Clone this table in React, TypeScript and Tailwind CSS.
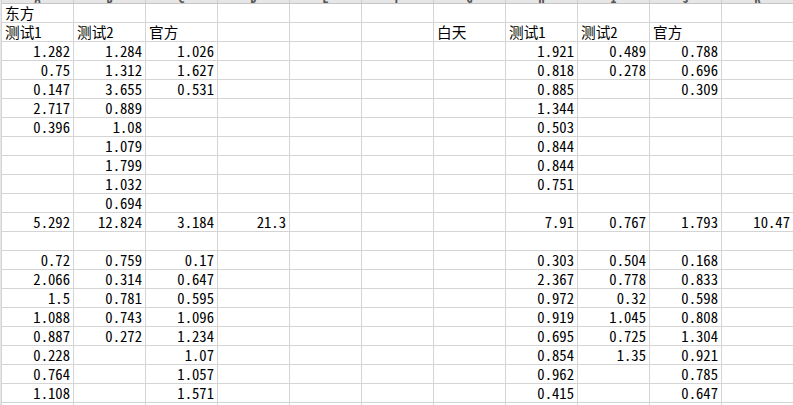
import React from "react";

const COLS = 11;
const letters = ["A", "B", "C", "D", "E", "F", "G", "H", "I", "J", "K"];

type Cell = string | null;

const rows: Cell[][] = [
  ["东方"],
  ["测试1", "测试2", "官方", null, null, null, "白天", "测试1", "测试2", "官方"],
  ["1.282", "1.284", "1.026", null, null, null, null, "1.921", "0.489", "0.788"],
  ["0.75", "1.312", "1.627", null, null, null, null, "0.818", "0.278", "0.696"],
  ["0.147", "3.655", "0.531", null, null, null, null, "0.885", null, "0.309"],
  ["2.717", "0.889", null, null, null, null, null, "1.344"],
  ["0.396", "1.08", null, null, null, null, null, "0.503"],
  [null, "1.079", null, null, null, null, null, "0.844"],
  [null, "1.799", null, null, null, null, null, "0.844"],
  [null, "1.032", null, null, null, null, null, "0.751"],
  [null, "0.694"],
  ["5.292", "12.824", "3.184", "21.3", null, null, null, "7.91", "0.767", "1.793", "10.47"],
  [],
  ["0.72", "0.759", "0.17", null, null, null, null, "0.303", "0.504", "0.168"],
  ["2.066", "0.314", "0.647", null, null, null, null, "2.367", "0.778", "0.833"],
  ["1.5", "0.781", "0.595", null, null, null, null, "0.972", "0.32", "0.598"],
  ["1.088", "0.743", "1.096", null, null, null, null, "0.919", "1.045", "0.808"],
  ["0.887", "0.272", "1.234", null, null, null, null, "0.695", "0.725", "1.304"],
  ["0.228", null, "1.07", null, null, null, null, "0.854", "1.35", "0.921"],
  ["0.764", null, "1.057", null, null, null, null, "0.962", null, "0.785"],
  ["1.108", null, "1.571", null, null, null, null, "0.415", null, "0.647"],
  [],
];

const isNum = (s: string) => /^[0-9.]+$/.test(s);

export default function App() {
  return (
    <div
      className="w-[793px] h-[405px] overflow-hidden bg-white text-black"
      style={{ fontFamily: '"Noto Sans Mono CJK SC", "Noto Sans CJK SC", "DejaVu Sans Mono", monospace' }}
    >
      <div className="flex w-[900px]">
        <div className="w-[2px] shrink-0 bg-[#e6e6e6] border-r border-[#d4d4d4]" />
        <div className="flex flex-col">
          <div className="flex h-[4px] bg-[#e6e6e6] border-b border-[#c6c6c6]">
            {letters.map((l) => (
              <div
                key={l}
                className="w-[72px] shrink-0 h-[3px] overflow-hidden flex items-end justify-center border-r border-[#cfcfcf]"
              >
                <span className="text-[12px] leading-[12px] text-[#555] mb-[-1px] font-bold">{l}</span>
              </div>
            ))}
          </div>
          {rows.map((r, ri) => (
            <div key={ri} className="flex h-[19px]">
              {Array.from({ length: COLS }).map((_, ci) => {
                const v = r[ci] ?? null;
                const num = v !== null && isNum(v);
                return (
                  <div
                    key={ci}
                    className={`w-[72px] shrink-0 h-[19px] border-r border-b border-[#d4d4d4] flex items-end px-[3px] whitespace-nowrap overflow-visible text-[14.67px] leading-[18px] ${
                      num ? "justify-end" : "justify-start"
                    }`}
                  >
                    {v}
                  </div>
                );
              })}
            </div>
          ))}
        </div>
      </div>
    </div>
  );
}
